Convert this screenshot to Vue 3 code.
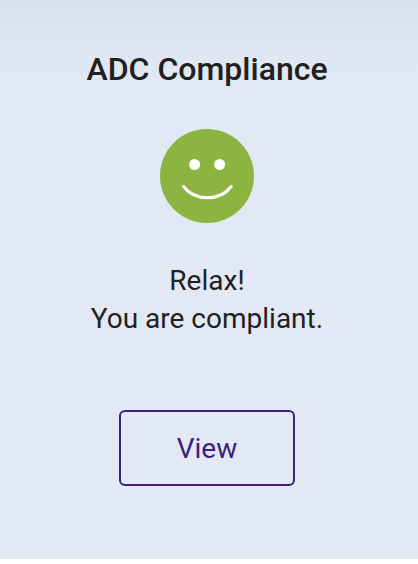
<script setup>
const title = 'ADC Compliance'
const lines = ['Relax!', 'You are compliant.']
</script>

<template>
  <section class="card">
    <h2 class="title">{{ title }}</h2>
    <svg class="face" viewBox="0 0 94 94" role="img" aria-label="Smiling face">
      <circle cx="47" cy="47" r="47" fill="#8bb440" />
      <circle cx="34.600" cy="35.500" r="5.500" fill="#fff" />
      <circle cx="59.600" cy="35.500" r="5.500" fill="#fff" />
      <path d="M23.500 57.500C35 72.500 60 72.500 71.200 57.500" fill="none" stroke="#fff" stroke-width="3" stroke-linecap="round" />
    </svg>
    <p class="status">
      <span v-for="line in lines" :key="line" class="line">{{ line }}</span>
    </p>
    <button type="button" class="view">View</button>
  </section>
</template>

<style>
body {
  background: #fff;
}
</style>

<style scoped>
.card {
  box-sizing: border-box;
  display: flex;
  flex-direction: column;
  align-items: center;
  padding: 49px 20px 73px 16px;
  background: linear-gradient(#d8deea, #dfe6f1 40px, #e2e9f4 80px);
  color: #212121;
  font-family: Roboto, "Liberation Sans", sans-serif;
}
.title {
  margin: 0;
  font-size: 32px;
  font-weight: 500;
  line-height: 40px;
}
.face {
  width: 94px;
  height: 94px;
  margin-top: 40px;
}
.status {
  margin: 39px 0 0;
  font-size: 28px;
  line-height: 38px;
  text-align: center;
}
.line {
  display: block;
}
.view {
  box-sizing: border-box;
  width: 176px;
  height: 76px;
  margin-top: 72px;
  padding: 2px 0 0;
  border: 2px solid #3d1f7d;
  border-radius: 6px;
  background: transparent;
  color: #3d1f7d;
  font: 400 28px/40px Roboto, "Liberation Sans", sans-serif;
  cursor: pointer;
}
</style>
